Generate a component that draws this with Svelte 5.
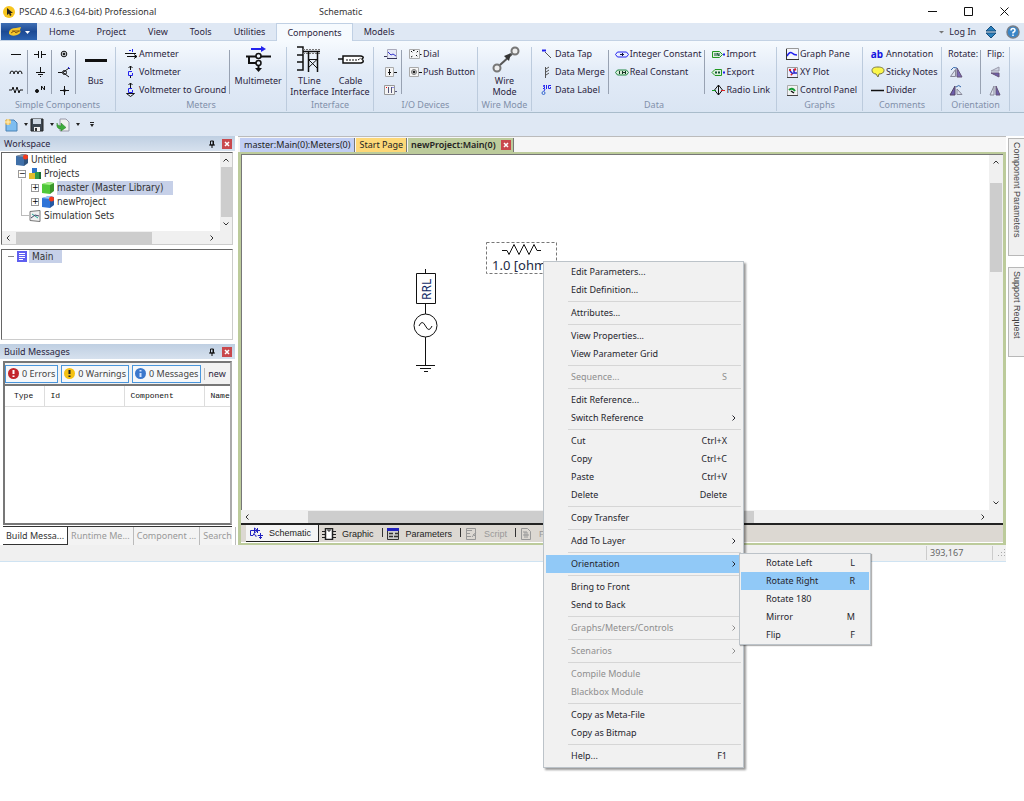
<script lang="ts">
	const ribbonTabs = ['Home', 'Project', 'View', 'Tools', 'Utilities', 'Components', 'Models'];
	let activeTab = $state('Components');

	// inner shapes of the 16x16 ribbon icons
	const icons: Record<string, string> = {
		wire: '<path d="M3 8.500h10"/>',
		coil: '<path d="M2 10q0-3 2-3t2 3q0-3 2-3t2 3q0-3 2-3t2 3"/>',
		resistor: '<path d="M1 8h3l1-3 2 6 2-6 2 6 1-3h3"/>',
		capacitor: '<path d="M2 8.500h5M10 8.500h4M6.500 5v7M9.500 5v7"/>',
		ground: '<path d="M8.500 3v5M4 8.500h9M6 10.500h5M8 12.500h1"/>',
		node: '<circle cx="5" cy="9" r="1.500" fill="#111"/><path d="M9.500 8V4l3 4V4"/>',
		pin: '<circle cx="8" cy="8" r="2.800"/><circle cx="8" cy="8" r="1" fill="#111"/>',
		split: '<path d="M2 8.500h4M13 4L7 8.500l6 4.500"/><circle cx="8.500" cy="8.500" r="2"/><path d="M12 3l2 2" stroke="#22e"/>',
		cross: '<path d="M8.500 4v9M4 8.500h9"/><circle cx="8.500" cy="8.500" r="1" fill="#111"/>',
		ammeter: '<path d="M2 7.500h11M4 10.500h10M11 8.500l3 2-3 2"/><path d="M6 4.500h2M9.500 3v3" stroke="#22e"/>',
		voltmeter: '<path d="M7.500 2v4M5.500 4l2-2 2 2M7.500 12v2"/><path d="M9 7.500H5.500v4h4V9" stroke="#22e"/>',
		voltground: '<path d="M7.500 1v5M5.500 3l2-2 2 2M3.500 11.500h8l-4 3z"/><path d="M9 6.500H5.500v4h4V8" stroke="#22e"/>',
		graph: '<path d="M5.500 3.500h9v9h-9z" fill="#e6e9f6" stroke="#aab"/><path d="M6 6l3 3 2-1 3 2" stroke="#33c"/><path d="M2 10.500h3M5 12.500h10" stroke="#335"/>',
		slider: '<path d="M3.500 3.500h8v9h-8z" fill="#f4f4f4" stroke="#aaa"/><path d="M7.500 5v6M6 8.500h3M12 8.500h3"/>',
		switch: '<path d="M2.500 3.500h10v9h-10z" fill="#f4f4f4" stroke="#999"/><path d="M6.500 5v6M9.500 5v6M13 9.500h2" stroke="#557"/><path d="M4 5.500h1" stroke="red"/><path d="M10.500 5.500h1" stroke="#22e"/>',
		dial: '<path d="M2.500 3.500h10v9h-10z" fill="#f6f6f6" stroke="#aaa"/><path d="M4 5l2 2M11 5L9 7M4 11l2-1M9 9l2 2M6 4.500h2M13 8.500h2" stroke-dasharray="1.500 1"/>',
		push: '<path d="M2.500 3.500h9v9h-9z" fill="#f6f6f6" stroke="#aaa"/><circle cx="7" cy="8" r="2.500" stroke="#777"/><circle cx="7" cy="8" r="1" fill="#111"/><path d="M12 8.500h3"/>',
		tap: '<path d="M6 6l6 6" stroke="#555"/><path d="M3 4.500h4" stroke="#22e" stroke-width="2"/>',
		merge: '<path d="M6.500 3v11M7 5l3-2M7 8l3-2M7 11l3-2" stroke="#555"/>',
		label: '<circle cx="4.500" cy="11" r="1.500" stroke="#36c"/><path d="M6 3.500H4.500v1h1v2H4M7.500 3v4M12 3.500H9.500v3h2V5M5 9l1-2" stroke="#22e"/>',
		intconst: '<path d="M1.500 8.500l2-2.500h9l2 2.500-2 2.500h-9z" fill="#e9eeff" stroke="#22e"/><path d="M8.500 7v3M6 8.500h4" stroke="#114"/>',
		realconst: '<path d="M1.500 8.500l2-2.500h9l2 2.500-2 2.500h-9z" fill="#d8ecd8" stroke="#284"/><path d="M5.500 7v3M8.500 7v3M11.500 7v3M8 8.500h4" stroke="#132"/>',
		import: '<path d="M2.500 5.500h7l3 3-3 3h-7z" fill="#dff0df" stroke="#292"/><path d="M5 7v3M7 10V7l2 3V7" stroke="#153"/><path d="M13 8.500h2" stroke="#22e" stroke-width="2"/>',
		export: '<path d="M5 5.500h6.500v6H5l-3-3z" fill="#dff0df" stroke="#292"/><path d="M5 8.500h2M8 8.500h2" stroke="#153" stroke-width="2"/><path d="M13 8.500h2" stroke="#22e" stroke-width="2"/>',
		radio: '<path d="M8.500 3l4 5-4 5-4-5zM8.500 3v10"/><path d="M2 8.500h4" stroke="#192"/><path d="M11 8.500h4" stroke="#d22"/>',
		graphpane: '<path d="M2.500 2.500h12v11h-12z" fill="#f4f6fb" stroke="#999"/><path d="M3 10q3-5 5-3t5 2" stroke="#22e" stroke-width="1.500"/><path d="M2 13.500h13M2.500 3v11" stroke="#333"/>',
		xy: '<path d="M3.500 3.500h10v10h-10z" fill="#eef" stroke="#999"/><path d="M3 13.500h11" stroke="#444"/><path d="M6 7l3 3M10 5v4h3" stroke="#22c" stroke-width="1.500"/><path d="M5 6h2M10 6l2-1M7 10l1 1" stroke="#d22" stroke-width="2"/>',
		panel: '<path d="M3.500 3.500h10v10h-10z" fill="#f2f2f2" stroke="#aaa"/><path d="M3 13.500h11" stroke="#444"/><path d="M5 8q3-3 6 1" stroke="#193" stroke-width="2"/><path d="M7 9l3 2" stroke-width="1.500"/>',
		note: '<path d="M8 3c4 0 6 1.500 6 3.500S12 10 9 10l-1 3-2-3C4 9.700 2 9 2 6.500S4 3 8 3z" fill="#fbf64a" stroke="#774"/>',
		divider: '<path d="M1 8.500h13" stroke-width="1.500"/>',
		rotleft: '<path d="M2.500 12.500l5-7v7z" fill="#dde3ee" stroke="#889"/><path d="M9 4l5 9H9z" fill="#7868b4" stroke="#657"/><path d="M3 6q2-4 6-2" stroke="#36a"/>',
		rotright: '<path d="M7 4v9H2z" fill="#6d5eac" stroke="#546"/><path d="M9 12.500V7l5 5.500z" fill="#dde3ee" stroke="#889"/><path d="M8 5q3-3 5 0" stroke="#36a"/>',
		flipv: '<path d="M12 3v4H4z" fill="#cfd4e2" stroke="#99a"/><path d="M12 13V9H4z" fill="#6d5eac" stroke="#657"/>',
		fliph: '<path d="M7 4v9H3z" fill="#dde3ee" stroke="#889"/><path d="M9 4v9h4z" fill="#6d5eac" stroke="#657"/>'
	};

	// icons of the tall buttons, 32x28
	const bigIcons: Record<string, string> = {
		bus: '<path d="M5 15.500h22" stroke-width="3"/>',
		multimeter: '<path d="M9 4h11" stroke="#22e" stroke-width="2"/><path d="M19 1l5 3-5 3z" fill="#22e" stroke="none"/><path d="M4 11.500h10M19 11.500h10M7 11v7h7" stroke-width="2"/><circle cx="16.500" cy="11" r="2.500" stroke-width="1.500"/><circle cx="16.500" cy="18" r="2.500" stroke-width="1.500"/><path d="M16.500 20v5" stroke-width="2"/><path d="M13 23h7l-3.500 4z" fill="#111" stroke="none"/>',
		tline: '<path d="M4 2h6v23H4M4 10h6M4 17h6" stroke-width="1.500"/><path d="M10 4.500h18M10 8.500h17" stroke="#777" stroke-dasharray="2 1"/><path d="M10 6.500h17M15.500 6v21M24.500 6v21" stroke-width="1.500"/><path d="M15 14.500h9L15 23M15 14l9 9"/>',
		cable: '<path d="M3 14h5M8 11h18q4 1 1 3 3 3-1 4H8z" fill="#fff" stroke-width="1.500"/><path d="M11 15h12l3-2" stroke-dasharray="2 1"/>',
		wiremode: '<circle cx="8" cy="23" r="3.500" fill="#eee" stroke="#777" stroke-width="2"/><circle cx="26" cy="6" r="3.500" fill="#eee" stroke="#777" stroke-width="2"/><path d="M11 20L23 9" stroke="#555" stroke-width="2"/><path d="M22 8l-7 3 5 5z" fill="#333" stroke="none"/>'
	};

	type Col = { kind: string; sep?: boolean; items: string[][] };
	type Group = { label: string; cols: Col[] };

	const groups: Group[] = [
		{ label: 'Simple Components', cols: [
			{ kind: 'small', sep: true, items: [['wire', 'Wire'], ['coil', 'Inductor'], ['resistor', 'Resistor']] },
			{ kind: 'small', sep: true, items: [['capacitor', 'Capacitor'], ['ground', 'Ground'], ['node', 'Node']] },
			{ kind: 'small', sep: true, items: [['pin', 'Pin'], ['split', 'Breakout'], ['cross', 'Junction']] },
			{ kind: 'big', items: [['bus', 'Bus']] }
		] },
		{ label: 'Meters', cols: [
			{ kind: 'list', sep: true, items: [['ammeter', 'Ammeter'], ['voltmeter', 'Voltmeter'], ['voltground', 'Voltmeter to Ground']] },
			{ kind: 'big', items: [['multimeter', 'Multimeter']] }
		] },
		{ label: 'Interface', cols: [{ kind: 'big', items: [['tline', 'TLine Interface'], ['cable', 'Cable Interface']] }] },
		{ label: 'I/O Devices', cols: [
			{ kind: 'small', sep: true, items: [['graph', 'Slider'], ['slider', 'Switch'], ['switch', 'Selector']] },
			{ kind: 'list', items: [['dial', 'Dial'], ['push', 'Push Button']] }
		] },
		{ label: 'Wire Mode', cols: [{ kind: 'big', items: [['wiremode', 'Wire Mode']] }] },
		{ label: 'Data', cols: [
			{ kind: 'list', sep: true, items: [['tap', 'Data Tap'], ['merge', 'Data Merge'], ['label', 'Data Label']] },
			{ kind: 'list', sep: true, items: [['intconst', 'Integer Constant'], ['realconst', 'Real Constant']] },
			{ kind: 'list', items: [['import', 'Import'], ['export', 'Export'], ['radio', 'Radio Link']] }
		] },
		{ label: 'Graphs', cols: [{ kind: 'list', items: [['graphpane', 'Graph Pane'], ['xy', 'XY Plot'], ['panel', 'Control Panel']] }] },
		{ label: 'Comments', cols: [{ kind: 'list', items: [['ab', 'Annotation'], ['note', 'Sticky Notes'], ['divider', 'Divider']] }] },
		{ label: 'Orientation', cols: [
			{ kind: 'titled', sep: true, items: [['', 'Rotate:'], ['rotleft', 'Rotate left'], ['rotright', 'Rotate right']] },
			{ kind: 'titled', items: [['', 'Flip:'], ['flipv', 'Flip vertical'], ['fliph', 'Flip horizontal']] }
		] }
	];

	type Entry = { text: string; key?: string; more?: boolean; off?: boolean };
	const menu: Entry[][] = [
		[{ text: 'Edit Parameters...' }, { text: 'Edit Definition...' }],
		[{ text: 'Attributes...' }],
		[{ text: 'View Properties...' }, { text: 'View Parameter Grid' }],
		[{ text: 'Sequence...', key: 'S', off: true }],
		[{ text: 'Edit Reference...' }, { text: 'Switch Reference', more: true }],
		[{ text: 'Cut', key: 'Ctrl+X' }, { text: 'Copy', key: 'Ctrl+C' }, { text: 'Paste', key: 'Ctrl+V' }, { text: 'Delete', key: 'Delete' }],
		[{ text: 'Copy Transfer' }],
		[{ text: 'Add To Layer', more: true }],
		[{ text: 'Orientation', more: true }],
		[{ text: 'Bring to Front' }, { text: 'Send to Back' }],
		[{ text: 'Graphs/Meters/Controls', more: true, off: true }],
		[{ text: 'Scenarios', more: true, off: true }],
		[{ text: 'Compile Module', off: true }, { text: 'Blackbox Module', off: true }],
		[{ text: 'Copy as Meta-File' }, { text: 'Copy as Bitmap' }],
		[{ text: 'Help...', key: 'F1' }]
	];
	const submenu: Entry[] = [
		{ text: 'Rotate Left', key: 'L' },
		{ text: 'Rotate Right', key: 'R' },
		{ text: 'Rotate 180' },
		{ text: 'Mirror', key: 'M' },
		{ text: 'Flip', key: 'F' }
	];
	let openItem = $state('Orientation');
	let picked = $state('Rotate Right');

	const buildTabs = ['Build Messa...', 'Runtime Me...', 'Component ...', 'Search'];
	let buildTab = $state('Build Messa...');
</script>

{#snippet chevron(dir: string)}
	<svg class="chevron {dir}" viewBox="0 0 8 8" width="8" height="8"><path d="M1.500 5.500l2.500-2.500 2.500 2.500" fill="none" stroke="currentColor" /></svg>
{/snippet}

{#snippet closeBtn(label: string)}
	<button class="close" aria-label={label}>
		<svg viewBox="0 0 8 8" width="8" height="8"><path d="M2 2l4 4M6 2L2 6" stroke="#fff" stroke-width="1.500" /></svg>
	</button>
{/snippet}

{#snippet paneHead(title: string)}
	<header class="pane-head">
		<span>{title}</span>
		<button aria-label="Pin {title}">
			<svg viewBox="0 0 8 8" width="8" height="8"><path d="M2.500 1h3v4h-3zM1 5h6M4 5v3M5 1v4" fill="none" stroke="#111" /></svg>
		</button>
		{@render closeBtn(`Close ${title}`)}
	</header>
{/snippet}

{#snippet cube(top: string, side: string, dot: boolean)}
	<svg viewBox="0 0 12 12" width="12" height="12">
		<path d="M0 2l7-2 5 1v8l-4 3-8-1z" fill={side} />
		<path d="M0 2l7-2 5 1-4 2z" fill={top} />
		<path d="M8 3v9l4-3V1z" fill="#000" opacity=".25" />
		{#if dot}<circle cx="9.500" cy="3" r="2.500" fill="#f23a1c" />{/if}
	</svg>
{/snippet}

{#snippet small(name: string)}
	{#if name === 'ab'}
		<b class="ab" aria-hidden="true">ab</b>
	{:else}
		<svg viewBox="0 0 16 16" width="16" height="16" fill="none" stroke="#111">{@html icons[name]}</svg>
	{/if}
{/snippet}

<div class="app">
	<div class="titlebar">
		<div class="app-name">
			<svg viewBox="0 0 12 12" width="12" height="12"><circle cx="6" cy="6" r="6" fill="#f7c51e" /><path d="M4 2v7l2-1.500 1 2.500 1.500-1L7.500 7H10z" fill="#222" /></svg>
			<span>PSCAD 4.6.3 (64-bit) Professional</span>
		</div>
		<span>Schematic</span>
		<div class="window-btns">
			<button aria-label="Minimize"><svg viewBox="0 0 9 9" width="9" height="9"><path d="M0 4.500h9" stroke="#111" /></svg></button>
			<button aria-label="Maximize"><svg viewBox="0 0 9 9" width="9" height="9"><path d="M.5.5h8v8h-8z" fill="none" stroke="#111" /></svg></button>
			<button aria-label="Close window"><svg viewBox="0 0 9 9" width="9" height="9"><path d="M.5.5l8 8M8.500.5l-8 8" stroke="#111" /></svg></button>
		</div>
	</div>

	<nav class="tabs">
		<button class="app-btn" aria-label="Application menu">
			<svg viewBox="0 0 24 12" width="24" height="12">
				<path d="M2 6q1-4 7-4l5-1-1 3q2 3-3 5t-8-1z" fill="#f3c62c" />
				<path d="M4 7l3-2 2 2 3-2M5 5h8" fill="none" stroke="#8a5a10" />
				<path d="M18 5h5l-2.500 3z" fill="#fff" />
			</svg>
		</button>
		{#each ribbonTabs as tab}
			<button class="tab" class:active={tab === activeTab} onclick={() => (activeTab = tab)}>{tab}</button>
		{/each}
		<div class="tabs-right">
			<button class="login"><svg viewBox="0 0 5 4" width="5" height="4"><path d="M0 1h5L2.500 3.500z" fill="#777" /></svg>Log In</button>
			<button aria-label="Collapse ribbon"><svg viewBox="0 0 12 14" width="12" height="14"><path d="M1 6l5-5 5 5zM1 8h10l-5 5z" fill="#2a80be" stroke="#174e7c" /></svg></button>
			<button aria-label="Help">
				<svg viewBox="0 0 14 14" width="14" height="14"><circle cx="7" cy="7" r="6" fill="#3a86c8" stroke="#777e88" stroke-width="1.500" /><path d="M5 5.500Q5 3.500 7 3.500t2 2Q9 6.500 7 7.500v1M7 9.500V11" fill="none" stroke="#fff" stroke-width="1.500" /></svg>
			</button>
		</div>
	</nav>

	<div class="ribbon">
		{#each groups as group}
			<section class="group">
				<div class="group-body">
					{#each group.cols as col}
						<div class="col {col.kind}" class:sep={col.sep}>
							{#each col.items as [name, label]}
								{#if col.kind === 'big'}
									<button>
										<svg viewBox="0 0 32 28" width="32" height="28" fill="none" stroke="#111">{@html bigIcons[name]}</svg>
										<span>{label}</span>
									</button>
								{:else if col.kind === 'list'}
									<button>{@render small(name)}<span>{label}</span></button>
								{:else if name}
									<button aria-label={label}>{@render small(name)}</button>
								{:else}
									<span class="col-title">{label}</span>
								{/if}
							{/each}
						</div>
					{/each}
				</div>
				<div class="group-label">{group.label}</div>
			</section>
		{/each}
	</div>

	<div class="quickbar">
		<button aria-label="New">
			<svg viewBox="0 0 14 14" width="14" height="14"><path d="M2 2h8l3 3v8H2z" fill="#7dbdf0" stroke="#4d82b4" /><circle cx="4" cy="4" r="3" fill="#f3c25a" /><path d="M4 1v6M1 4h6" stroke="#fff1c0" /></svg>
			<i></i>
		</button>
		<button aria-label="Save">
			<svg viewBox="0 0 14 14" width="14" height="14"><path d="M1 1h12v12H1z" fill="#3c4650" stroke="#222" /><path d="M3 1h8v5H3z" fill="#cfd9e4" /><path d="M4 9h6v4H4z" fill="#eee" /><path d="M5 10h2v3H5z" fill="#333" /></svg>
			<i></i>
		</button>
		<button aria-label="Load">
			<svg viewBox="0 0 14 14" width="14" height="14"><path d="M4 1h6l3 3v9H4z" fill="#f1f1ee" stroke="#99a" /><path d="M1 5q0 3 4 3V5l5 4.500L5 13v-2Q0 11 1 5z" fill="#3fae3a" stroke="#267a22" stroke-width=".5" /></svg>
			<i></i>
		</button>
		<button class="more" aria-label="Customize"><i></i></button>
	</div>

	<div class="work">
		<aside class="dock">
			{@render paneHead('Workspace')}
			<div class="tree-box">
				<div class="tree-view">
					<ul class="tree">
						<li class="root">{@render cube('#8a929c', '#3f6fa8', true)}<span>Untitled</span></li>
						<li class="lvl1"><b class="exp">−</b>
							<svg viewBox="0 0 12 12" width="12" height="12"><path d="M3 0h5v6H3z" fill="#2f74c8" /><path d="M0 5h6v6H0z" fill="#e2bc2c" /><path d="M6 4h6v7H6z" fill="#2f9a48" /><path d="M10 4h2v7h-2z" fill="#1b6a30" /></svg>
							<span>Projects</span>
						</li>
						<li class="lvl2"><b class="exp">+</b>{@render cube('#a8ee8e', '#4fc83a', false)}<span class="picked">master (Master Library)</span></li>
						<li class="lvl2"><b class="exp">+</b>{@render cube('#9cc8f8', '#2f74d8', true)}<span>newProject</span></li>
						<li class="leaf">
							<svg viewBox="0 0 12 12" width="12" height="12"><path d="M1 1.500l10-1v11l-10-1z" fill="#f0f0f0" stroke="#777" /><path d="M3 4l6 4" stroke="#2a9" /><path d="M2 8l4-3 4 1" fill="none" stroke="#446" /></svg>
							<span>Simulation Sets</span>
						</li>
					</ul>
					<div class="vbar">{@render chevron('up')}<i class="thumb"></i>{@render chevron('down')}</div>
				</div>
				<div class="hbar">{@render chevron('left')}<i class="thumb"></i>{@render chevron('right')}</div>
			</div>
			<div class="module-box">
				<span class="dash"></span>
				<svg viewBox="0 0 10 12" width="10" height="12"><path d="M0 0h10v11H0z" fill="#5f5ff0" /><path d="M2 2.500h6M2 4.500h6M2 6.500h6M2 8.500h4" stroke="#fff" /></svg>
				<span class="picked">Main</span>
			</div>

			{@render paneHead('Build Messages')}
			<div class="messages">
				<div class="msg-bar">
					<button><svg viewBox="0 0 11 11" width="11" height="11"><circle cx="5.500" cy="5.500" r="5.500" fill="#c3262c" /><path d="M5.500 2v4M5.500 7.500V9" stroke="#fff" stroke-width="2" /></svg>0 Errors</button>
					<button><svg viewBox="0 0 11 11" width="11" height="11"><circle cx="5.500" cy="5.500" r="5.500" fill="#f5c112" /><path d="M5.500 2v4M5.500 7.500V9" stroke="#222" stroke-width="2" /></svg>0 Warnings</button>
					<button><svg viewBox="0 0 11 11" width="11" height="11"><circle cx="5.500" cy="5.500" r="5.500" fill="#3b78cc" /><path d="M5.500 2v1.500M5.500 5v4" stroke="#cfe2ff" stroke-width="2" /></svg>0 Messages</button>
					<span class="scope">new</span>
				</div>
				<table>
					<thead><tr><th>Type</th><th>Id</th><th>Component</th><th>Name</th></tr></thead>
				</table>
			</div>
			<div class="build-tabs">
				{#each buildTabs as tab}
					<button class:active={tab === buildTab} onclick={() => (buildTab = tab)}>{tab}</button>
				{/each}
			</div>
		</aside>

		<main class="editor">
			<div class="doc-tabs">
				<button class="doc blue">master:Main(0):Meters(0)</button>
				<button class="doc yellow">Start Page</button>
				<div class="doc green">
					<span>newProject:Main(0)</span>
					{@render closeBtn('Close newProject')}
				</div>
			</div>
			<div class="frame">
				<div class="canvas-row">
					<div class="canvas">
						<svg width="330" height="230" viewBox="0 1 330 230" fill="none" stroke="#111">
							<!-- source with its RRL impedance -->
							<path d="M183.500 115v5M183.500 150v10M183.500 183v28" />
							<path d="M174.500 119.500h19v30h-19z" />
							<text class="rrl" transform="translate(189 146) rotate(-90)">RRL</text>
							<circle cx="183.500" cy="171.500" r="11.500" />
							<path d="M177 172q3-7 6.500 0t6.500 0" />
							<path d="M174 211.500h19M178 214.500h11M182 217.500h4" />
							<!-- selected resistor -->
							<path d="M244.500 88.500h70v31h-70z" stroke="#777" stroke-dasharray="3 2" />
							<path d="M260 96.500h5l2 4 5-10 5 10 5-10 5 10 5-10 3 6h4" />
							<text x="250" y="116">1.0 [ohm]</text>
						</svg>
					</div>
					<div class="vbar wide">{@render chevron('up')}<i class="thumb"></i>{@render chevron('down')}</div>
				</div>
				<div class="hbar wide">{@render chevron('left')}<i class="thumb"></i>{@render chevron('right')}</div>
				<div class="view-tabs">
					<button class="active">
						<svg viewBox="0 0 14 12" width="14" height="12" fill="none" stroke="#2222c0"><path d="M4 3.500H1.500v5H4l1-2 2 3 1-1M4 3.500h7M5.500 1v5l3-2.500zM8.500 1v5M9 8.500h5M10 10.500h3M11.500 6v6" /></svg>Schematic
					</button>
					<button>
						<svg viewBox="0 0 14 12" width="14" height="12" fill="none" stroke="#222"><path d="M3.500.5h7v11h-7z" fill="#fff" stroke-width="1.500" /><path d="M6 1v2h2V1M0 3.500h3M0 6.500h3M0 9.500h3M11 3.500h3M11 6.500h3M11 9.500h3" /></svg>Graphic
					</button>
					<button>
						<svg viewBox="0 0 14 12" width="14" height="12" fill="none" stroke="#333"><path d="M1.500 1.500h11v10h-11z" fill="#ccc" /><path d="M1 1.500h12" stroke="#2222c0" stroke-width="3" /><path d="M3 5.500h4M3 8.500h4M9 5.500h3M8 8.500h4" stroke-width="1.500" /></svg>Parameters
					</button>
					<button disabled>
						<svg viewBox="0 0 14 12" width="14" height="12" fill="none" stroke="#999"><path d="M2.500.5h9v11h-9z" /><path d="M2 2.500h6M2 5.500h4M2 8.500h5M8 9l4-5M9 6l2 2" /></svg>Script
					</button>
					<button disabled>
						<svg viewBox="0 0 14 12" width="14" height="12" fill="none" stroke="#999"><path d="M2.500.5h6l3 3v8h-9z" /><path d="M4 4h4v6M4 7h6M6 4v6" /></svg>Fortran
					</button>
				</div>
			</div>
		</main>

		<aside class="side">
			<button class="params">Component Parameters</button>
			<button class="support">Support Request</button>
		</aside>
	</div>

	<footer class="status">
		<span class="coords">393,167</span>
		<svg viewBox="0 0 8 8" width="8" height="8" fill="#aaa"><path d="M6 0h1v1H6zM3 3h1v1H3zM6 3h1v1H6zM0 6h1v1H0zM3 6h1v1H3zM6 6h1v1H6z" /></svg>
	</footer>

	<div class="menu" role="menu">
		{#each menu as section}
			<div class="section">
				{#each section as item}
					<div class="slot">
						<button class="item" role="menuitem" class:hot={item.text === openItem} disabled={item.off} onclick={() => (openItem = item.text)}>
							<span>{item.text}</span>
							{#if item.key}<span class="key">{item.key}</span>{/if}
							{#if item.more}{@render chevron('right')}{/if}
						</button>
						{#if item.text === 'Orientation' && openItem === item.text}
							<div class="menu sub" role="menu">
								{#each submenu as entry}
									<button class="item" role="menuitem" class:hot={entry.text === picked} onclick={() => (picked = entry.text)}>
										<span>{entry.text}</span>
										{#if entry.key}<span class="key">{entry.key}</span>{/if}
									</button>
								{/each}
							</div>
						{/if}
					</div>
				{/each}
			</div>
		{/each}
	</div>
</div>

<style>
	:global(body) { background: #fff; }

	.app {
		position: relative;
		min-height: 100vh;
		font: 9px/12px 'Noto Sans', 'Open Sans', sans-serif;
		color: #2b2540;
	}
	.app :global(svg) { display: block; flex-shrink: 0; }
	button {
		font: inherit;
		color: inherit;
		background: none;
		border: 0;
		padding: 0;
		margin: 0;
	}

	.titlebar {
		display: grid;
		grid-template-columns: 316px 1fr auto;
		align-items: center;
		height: 23px;
		padding-left: 3px;
		color: #333;
	}
	.app-name { display: flex; align-items: center; gap: 4px; }
	.window-btns { display: flex; padding-right: 2px; }
	.window-btns button { width: 36px; height: 23px; display: grid; place-items: center; }

	.tabs {
		display: flex;
		height: 18px;
		background: #dfe8f4;
		border-bottom: 1px solid #c3d2e4;
		box-sizing: border-box;
	}
	.app-btn {
		width: 36px;
		margin: 0 1px;
		background: linear-gradient(#3f6fb4, #1c4a94 50%, #2b62b0);
		display: grid;
		place-items: center;
	}
	.tab { padding: 0 11px; height: 18px; }
	.tab.active {
		background: #f6fafe;
		border: 1px solid #c0d0e4;
		border-bottom: 0;
		padding: 0 10px;
	}
	.tabs-right { display: flex; align-items: center; gap: 9px; margin-left: auto; padding-right: 4px; }
	.login { display: flex; align-items: center; gap: 5px; }

	.ribbon {
		display: grid;
		grid-template-columns: 116fr 171fr 87fr 104fr 54fr 245fr 86fr 79fr 68fr 14fr;
		height: 72px;
		padding-top: 4px;
		box-sizing: border-box;
		background: linear-gradient(#f6fafe, #e2ebf7 45%, #dae5f3);
		border-bottom: 1px solid #a9bccb;
	}
	.group { min-width: 0; border-right: 1px solid #bccbdd; margin: 2px 0 4px; }
	.group-body { display: flex; height: 54px; margin-top: -2px; }
	.group-label { text-align: center; color: #8290aa; line-height: 12px; white-space: nowrap; }
	.col { display: flex; flex-direction: column; }
	.col button { white-space: nowrap; }
	.sep { position: relative; }
	.sep::after {
		content: '';
		position: absolute;
		right: 0;
		top: 5px;
		height: 44px;
		width: 1px;
		background: #98a2b2;
	}
	.small:first-child { padding-left: 4px; }
	.small button { width: 24px; height: 18px; display: grid; place-items: center; }
	.list { padding: 0 4px 0 7px; }
	.sep + .list { padding-left: 5px; }
	.list button { display: flex; align-items: center; height: 18px; }
	.ab { width: 14px; margin-right: 2px; font-size: 10px; color: #1616e0; }
	.titled { padding: 0 3px 0 6px; }
	.titled button { height: 18px; }
	.col-title { line-height: 18px; }
	.big { flex: 1; flex-direction: row; justify-content: center; gap: 3px; }
	.big button {
		display: flex;
		flex-direction: column;
		align-items: center;
		justify-content: flex-start;
		gap: 2px;
		line-height: 11px;
	}
	.big span { width: min-content; white-space: normal; }

	.quickbar {
		display: flex;
		align-items: center;
		height: 23px;
		padding-left: 4px;
		background: #dfe8f4;
	}
	.quickbar button { display: flex; align-items: center; gap: 4px; }
	.quickbar i { margin: 0 2px; border: 2px solid transparent; border-top: 3px solid #222; border-bottom: 0; }
	.quickbar .more { margin-left: 8px; border-top: 1px solid #222; padding-top: 1px; }
	.quickbar .more i { margin: 0; }

	.work { display: flex; height: 409px; }

	.dock { width: 235px; display: flex; flex-direction: column; flex-shrink: 0; }
	.pane-head {
		display: flex;
		align-items: center;
		gap: 6px;
		height: 15px;
		padding: 0 3px 0 4px;
		background: linear-gradient(#bfcfe2, #d6e1ee);
		flex-shrink: 0;
	}
	.pane-head span { flex: 1; }
	.close { width: 10px; height: 10px; display: grid; place-items: center; background: #c9484c; }

	.tree-box, .module-box {
		margin: 1px 2px 0 1px;
		border: 1px solid #ccc;
		border-top: 1px solid #666;
		border-left: 1px solid #666;
		font: 10px/14px 'DejaVu Sans Condensed', 'DejaVu Sans', sans-serif;
		color: #333;
	}
	.tree-view { display: flex; height: 78px; }
	.tree { flex: 1; margin: 0; padding: 0; list-style: none; }
	.tree li { display: flex; align-items: center; height: 14px; gap: 3px; position: relative; }
	.root { padding-left: 14px; }
	.lvl1 { padding-left: 16px; }
	.lvl2 { padding-left: 29px; }
	.leaf { padding-left: 27px; }
	.leaf::before {
		content: '';
		position: absolute;
		left: 19px;
		bottom: 7px;
		width: 7px;
		height: 36px;
		border: 1px solid #bbb;
		border-width: 0 0 1px 1px;
	}
	.exp {
		width: 6px;
		height: 6px;
		border: 1px solid #999;
		font: 8px/6px 'DejaVu Sans', sans-serif;
		text-align: center;
		background: #fff;
		color: #000;
	}
	.picked { background: #c6d0e8; padding-right: 9px; }

	.vbar {
		width: 12px;
		display: flex;
		flex-direction: column;
		align-items: center;
		background: #f0f0f0;
		color: #333;
		padding: 3px 0;
		box-sizing: border-box;
	}
	.vbar .thumb { width: 11px; flex: 1; margin: 3px 0; background: #cdcdcd; }
	.vbar.wide { width: 14px; }
	.vbar.wide .thumb { flex: none; height: 89px; margin: 17px 0 auto; width: 12px; }
	.hbar {
		height: 13px;
		display: flex;
		align-items: center;
		background: #f0f0f0;
		color: #333;
		padding: 0 16px 0 2px;
	}
	.hbar .thumb { height: 12px; width: 136px; margin: 0 auto 0 4px; background: #cdcdcd; }
	.hbar.wide .thumb { width: 60%; margin-left: 57px; }
	.chevron.down { transform: rotate(180deg); }
	.chevron.left { transform: rotate(-90deg); }
	.chevron.right { transform: rotate(90deg); }

	.module-box { display: flex; gap: 3px; height: 89px; margin: 4px 2px 4px 1px; padding-left: 6px; align-items: flex-start; }
	.module-box svg { margin-top: 1px; }
	.module-box .picked { padding: 0 9px 0 3px; line-height: 13px; margin-left: -1px; }
	.dash { width: 6px; height: 1px; background: #888; margin-top: 6px; }

	.messages {
		flex: 1;
		min-height: 0;
		margin: 2px 3px 0;
		border: 2px solid #777;
		border-right-color: #aaa;
		overflow: hidden;
	}
	.msg-bar {
		display: flex;
		align-items: center;
		gap: 3px;
		height: 21px;
		border-bottom: 2px solid #777;
		background: #f2f2f2;
		white-space: nowrap;
	}
	.msg-bar button {
		display: flex;
		align-items: center;
		gap: 3px;
		height: 18px;
		padding: 0 2px;
		border: 1px solid #4a96dc;
		background: #f6f8fa;
		color: #444;
	}
	.scope { border-left: 1px solid #bbb; padding-left: 3px; }
	table {
		width: 260px;
		table-layout: fixed;
		border-collapse: collapse;
		font: 8px/12px 'Liberation Mono', monospace;
	}
	th {
		height: 20px;
		padding: 0 0 0 6px;
		font-weight: 400;
		text-align: left;
		border: 1px solid #ddd;
		border-width: 0 1px 1px 0;
		color: #111;
		box-sizing: border-box;
	}
	th:first-child { width: 39px; padding-left: 9px; }
	th:nth-child(2), th:nth-child(3) { width: 80px; }

	.build-tabs {
		display: flex;
		height: 18px;
		margin: 1px 3px 0 3px;
		border-top: 1px solid #333;
		background: #f3f3f3;
	}
	.build-tabs button { padding: 0 3px; color: #999; border-right: 1px solid #bbb; white-space: nowrap; }
	.build-tabs button.active {
		background: #fff;
		color: #333;
		border: 1px solid #333;
		border-width: 0 1px 1px 0;
	}

	.editor { flex: 1; min-width: 0; margin-left: 3px; display: flex; flex-direction: column; }
	.doc-tabs {
		display: flex;
		height: 16px;
		padding: 1px 0 0 2px;
		box-sizing: border-box;
		background: #f6f6f6;
		border-top: 1px solid #bbb;
	}
	.doc {
		display: flex;
		align-items: center;
		gap: 5px;
		padding: 0 4px;
		margin-right: 1px;
		border-right: 1px solid #777;
		color: #222;
	}
	.blue { background: #c1cef4; }
	.yellow { background: #fdd878; padding: 0 3px; }
	.green { background: #bccb9b; font-weight: 600; padding: 0 2px 0 3px; }
	.frame {
		flex: 1;
		min-height: 0;
		display: flex;
		flex-direction: column;
		border: 2px solid #bccb9b;
		border-width: 2px 3px;
	}
	.canvas-row { flex: 1; min-height: 0; display: flex; border: 1px solid #777; border-width: 1px 0 0 1px; }
	.canvas { flex: 1; min-width: 0; overflow: hidden; }
	.canvas text { font-size: 13px; fill: #222a44; stroke: none; }
	.canvas .rrl { font-size: 12px; fill: #112a66; }
	.view-tabs {
		display: flex;
		height: 17px;
		padding-left: 5px;
		background: #dcd8d2;
		border-top: 2px solid #222;
		border-bottom: 1px solid #fff;
		font: 9px/12px 'Liberation Sans', Arial, sans-serif;
	}
	.view-tabs button { display: flex; align-items: center; gap: 6px; padding: 0 9px 0 3px; color: #222; position: relative; }
	.view-tabs button + button::after {
		content: '';
		position: absolute;
		right: 0;
		top: 3px;
		height: 9px;
		border-right: 1px solid #333;
	}
	.view-tabs button:disabled { color: #999; }
	.view-tabs .active {
		background: #f4f4f4;
		border: 1px solid #222;
		border-width: 0 1px 1px 0;
		padding-right: 7px;
	}

	.side { width: 16px; margin-left: 2px; padding-top: 2px; display: flex; flex-direction: column; gap: 11px; }
	.side button {
		writing-mode: vertical-rl;
		text-align: left;
		padding: 3px 0;
		color: #444;
		background: #f0f0f0;
		border: 1px solid #b8b8b8;
		border-right: 0;
		font: 9px/12px 'Liberation Sans', Arial, sans-serif;
		box-sizing: border-box;
	}
	.params { height: 118px; }
	.support { height: 90px; }

	.status {
		display: flex;
		justify-content: flex-end;
		align-items: center;
		height: 16px;
		margin-right: 18px;
		background: #f0f0f0;
		border-bottom: 1px solid #cfe3f2;
		color: #666;
	}
	.coords { width: 62px; padding-left: 3px; border-left: 1px solid #ccc; border-right: 1px solid #ccc; margin-right: 5px; line-height: 14px; }

	.menu {
		position: absolute;
		left: 543px;
		top: 261px;
		width: 201px;
		padding: 1px 2px 2px;
		box-sizing: border-box;
		background: #f1f1f1;
		border: 1px solid #bcc3c9;
		box-shadow: 2px 2px 2px rgba(0, 0, 0, 0.4);
		color: #26262e;
	}
	.section + .section::before {
		content: '';
		display: block;
		height: 1px;
		margin: 2px 0 2px 22px;
		background: #d6d6d6;
	}
	.slot { position: relative; }
	.item {
		display: flex;
		align-items: center;
		width: 100%;
		height: 18px;
		padding: 0 14px 0 25px;
	}
	.item span:first-child { flex: 1; text-align: left; }
	.item :global(.chevron) { margin-right: -11px; }
	.item:disabled { color: #8f8f8f; }
	.item.hot { background: #91c9f7; }
	.menu.sub { left: 193px; top: -2px; width: 132px; padding: 0 1px; box-shadow: 1px 1px 1px rgba(0, 0, 0, 0.3); z-index: 1; }
</style>
